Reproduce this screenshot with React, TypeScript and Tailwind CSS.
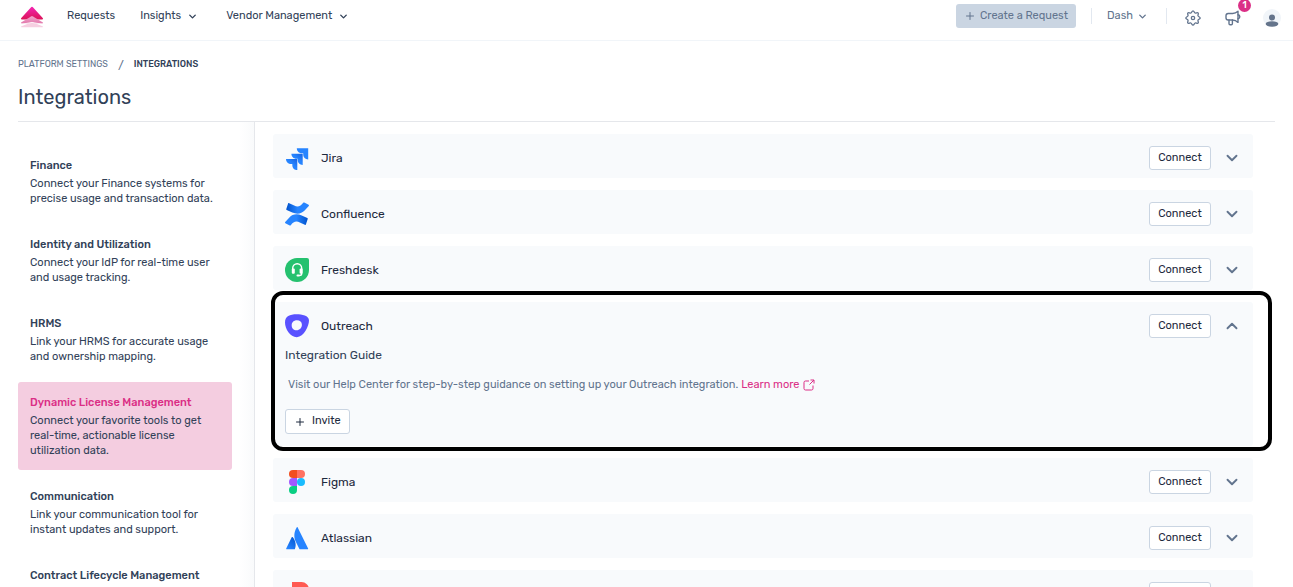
import type { ReactNode } from "react";
import clsx from "clsx";
import { ChevronDown, ChevronUp, Plus } from "lucide-react";

const categories = [
  { title: "Finance", text: "Connect your Finance systems for precise usage and transaction data." },
  { title: "Identity and Utilization", text: "Connect your IdP for real-time user and usage tracking." },
  { title: "HRMS", text: "Link your HRMS for accurate usage and ownership mapping." },
  {
    title: "Dynamic License Management",
    text: "Connect your favorite tools to get real-time, actionable license utilization data.",
    active: true,
  },
  { title: "Communication", text: "Link your communication tool for instant updates and support." },
  { title: "Contract Lifecycle Management", text: "" },
];

const BrandLogo = () => (
  <svg viewBox="0 0 24 22" className="h-[22px] w-6" aria-hidden="true">
    <defs>
      <linearGradient id="brand" x1="0" y1="0" x2="0" y2="1">
        <stop offset="0" stopColor="#f326b4" />
        <stop offset="1" stopColor="#dc1458" />
      </linearGradient>
      <linearGradient id="brandMid" x1="0" y1="0" x2="0" y2="1">
        <stop offset="0" stopColor="#f2a9cf" />
        <stop offset="1" stopColor="#e277ab" />
      </linearGradient>
    </defs>
    <path d="M1.800 13.400c-.8 0-1.100-.7-.5-1.300L11.300 1q.7-.7 1.400 0l10 11.100c.6.600.3 1.300-.5 1.300z" fill="url(#brand)" />
    <path d="M1.800 17.400c-.8 0-1-.7-.4-1.100L11 10.400q1-.6 2 0l9.600 5.900c.6.400.4 1.100-.4 1.100z" fill="url(#brandMid)" />
    <path d="M1.800 21.200c-.8 0-1-.7-.3-1l9.300-3.700q1.200-.4 2.400 0l9.300 3.700c.7.300.5 1-.3 1z" fill="#f6cfe1" />
    <path d="M1.500 18.300 12 16.400l10.500 1.900" fill="none" stroke="#fff" strokeWidth=".8" />
  </svg>
);

const GearIcon = () => (
  <svg viewBox="0 0 24 24" className="size-4" fill="none" stroke="currentColor" strokeWidth="2" strokeLinejoin="round" aria-hidden="true">
    <path d="M12 1.200c1.700 0 1.900 2.800 3.200 3.300s3.400-1.300 4.500-.2-.7 3.200-.2 4.500 3.300 1.500 3.300 3.200-2.800 1.900-3.300 3.200 1.300 3.400.2 4.500-3.200-.7-4.500-.2-1.500 3.300-3.200 3.300-1.900-2.800-3.200-3.300-3.400 1.300-4.500.2.700-3.200.2-4.500-3.300-1.500-3.300-3.200 2.800-1.900 3.300-3.200-1.300-3.400-.2-4.500 3.200.7 4.500.2 1.500-3.300 3.200-3.300z" />
    <circle cx="12" cy="12" r="2.500" />
  </svg>
);

const MegaphoneIcon = () => (
  <svg viewBox="0 0 16 16" className="size-4" fill="none" stroke="currentColor" strokeWidth="1.400" strokeLinejoin="round" strokeLinecap="round" aria-hidden="true">
    <path d="M13 1.200v11.200C11.400 10.800 9.700 10 7.600 10H3.200A2.200 2.200 0 0 1 1 7.800V5.700a2.200 2.200 0 0 1 2.200-2.200h4.400c2.100 0 3.800-.8 5.400-2.300z" />
    <path d="M13 4.800c2.400.4 2.400 3.600 0 4M4 10v3.600c0 .7.400 1.200 1.100 1.200h1.200c.7 0 1.100-.5 1.100-1.200V10" />
  </svg>
);

const JiraLogo = () => (
  <svg viewBox="0 0 24 24" className="size-6" aria-hidden="true">
    <defs>
      <linearGradient id="jira" x1="1" y1="0" x2="0.300" y2="0.800">
        <stop offset="0.150" stopColor="#1a6ae8" />
        <stop offset="0.600" stopColor="#2684ff" />
      </linearGradient>
    </defs>
    <path d="M11.800 2.300h11.400v11.200c-2.900 0-5-2.100-5-4.900V7.300h-1.400c-2.900 0-5-2.200-5-5z" fill="#2684ff" />
    <path d="M6.400 7.700h11.300V19c-2.900 0-5-2.100-5-4.900v-1.400h-1.300c-2.900 0-5-2.200-5-5z" fill="url(#jira)" />
    <path d="M1 13.100h11.300v11c-2.900 0-5-2.100-5-4.900v-1.100H6c-2.900 0-5-2.200-5-5z" fill="url(#jira)" />
  </svg>
);

const confluenceWave =
  "M4.200 1.300c-.3-.4-.9-.3-1.100.1L1.300 7c-.1.400 0 .8.400 1l5.600 2.600c4.800 2.100 9.300 1.300 12.300-2l4.200-4.700c.3-.5.200-.9-.2-1.200L19.300.500c-.4-.2-.8-.1-1.100.3-2.500 3.600-5.500 4.600-9 2.800z";

const ConfluenceLogo = () => (
  <svg viewBox="0 0 24 24" className="size-6" aria-hidden="true">
    <defs>
      <linearGradient id="confluence" x1="0" y1="0" x2="1" y2="0">
        <stop offset="0" stopColor="#0052cc" />
        <stop offset="0.500" stopColor="#2684ff" />
      </linearGradient>
    </defs>
    <path d={confluenceWave} fill="url(#confluence)" />
    <path d={confluenceWave} transform="rotate(180 12 12)" fill="url(#confluence)" />
  </svg>
);

const FreshdeskLogo = () => (
  <svg viewBox="0 0 24 24" className="size-6" aria-hidden="true">
    <path d="M12 0h10a2 2 0 0 1 2 2v10A12 12 0 1 1 12 0z" fill="#25c16f" />
    <path d="M7.700 12v-1.800a4.500 4.500 0 0 1 9 0v5.600c0 1.200-.8 1.800-2.700 1.800" fill="none" stroke="#fff" strokeWidth="1.400" />
    <rect x="6.800" y="10.600" width="3" height="5.200" rx="1" fill="#fff" />
    <rect x="14.600" y="10.600" width="3" height="5.200" rx="1" fill="#fff" />
    <rect x="11.500" y="16.600" width="3.200" height="1.800" rx=".9" fill="#fff" />
  </svg>
);

const OutreachLogo = () => (
  <svg viewBox="0 0 24 24" className="size-6" aria-hidden="true">
    <path
      fillRule="evenodd"
      d="M11.500.3c5.500 0 12.500 1.200 12.500 6.300 0 5.300-5 16.600-12.200 16.600C5.200 23.200 0 14.900 0 8.500 0 2.200 5 .3 11.500.3zM12 6.300c-3.400 0-5.300 2.200-5.300 5.100s2 4.900 4.800 4.900c3.100 0 5.400-2.500 5.400-5.500 0-2.900-2-4.500-4.900-4.500z"
      fill="#5951ff"
    />
  </svg>
);

const FigmaLogo = () => (
  <svg viewBox="0 0 24 24" className="size-6" aria-hidden="true">
    <path d="M12 0H8a4 4 0 0 0 0 8h4z" fill="#f24e1e" />
    <path d="M12 0h4a4 4 0 0 1 0 8h-4z" fill="#ff7262" />
    <path d="M12 8H8a4 4 0 0 0 0 8h4z" fill="#a259ff" />
    <circle cx="16" cy="12" r="4" fill="#1abcfe" />
    <path d="M8 16h4v4a4 4 0 1 1-4-4z" fill="#0acf83" />
  </svg>
);

const AtlassianLogo = () => (
  <svg viewBox="0 0 24 24" className="size-6" aria-hidden="true">
    <defs>
      <linearGradient id="atlassian" x1="1" y1="0" x2="0.300" y2="1">
        <stop offset="0" stopColor="#0052cc" />
        <stop offset="1" stopColor="#2684ff" />
      </linearGradient>
    </defs>
    <path d="M7.800 11.200c-.3-.4-.8-.4-1.100.1L1.200 22.500c-.2.400.1.800.5.800h7.600c.3 0 .5-.1.600-.4 1.600-3.400.7-8.600-2.100-11.700z" fill="url(#atlassian)" />
    <path d="M11.700 1.400c-3 4.900-2.900 10.300-.9 14.300l3.600 7.200c.1.300.4.400.6.400h7.600c.5 0 .7-.4.500-.8L12.700 1.400c-.2-.5-.7-.5-1 0z" fill="#2684ff" />
  </svg>
);

const RedLogo = () => (
  <svg viewBox="0 0 24 24" className="size-6" aria-hidden="true">
    <path d="M7 0h9.500a7.500 7.500 0 0 1 0 15H12v9H7z" fill="#ff5a52" />
  </svg>
);

const IntegrationCard = ({ name, logo, children }: { name?: string; logo: ReactNode; children?: ReactNode }) => {
  const Chevron = children ? ChevronUp : ChevronDown;
  return (
    <section className="relative shrink-0 rounded-[3px] bg-slate-50 px-3">
      <div className="flex h-11 items-center pt-1">
        {logo}
        <h2 className="ml-3 flex-1 text-[12px] text-slate-800">{name}</h2>
        <button className="h-6 w-[62px] rounded-[3px] border border-slate-300 bg-white text-slate-800">
          {name && "Connect"}
        </button>
        <button aria-label="Toggle details" className="ml-3 text-slate-500">
          <Chevron size={18} strokeWidth={2.5} />
        </button>
      </div>
      {children}
    </section>
  );
};

const OutreachGuide = () => (
  <div className="pb-3">
    <h3 className="text-[12px] leading-[18px]">Integration Guide</h3>
    <p className="mt-[13px] ml-[3px] flex items-center leading-4 text-slate-500">
      Visit our Help Center for step-by-step guidance on setting up your Outreach integration.
      <a href="#" className="ml-[3px] flex items-center gap-1 text-[#db2f86]">
        Learn more
        <svg viewBox="0 0 12 12" className="size-3" fill="none" stroke="currentColor" aria-hidden="true">
          <path d="M6 2H2.500A1.500 1.500 0 0 0 1 3.500v6A1.500 1.500 0 0 0 2.500 11h6A1.500 1.500 0 0 0 10 9.500V6.500M7.500 1H11v3.500M11 1 6.500 5.500" />
        </svg>
      </a>
    </p>
    <button className="mt-4 flex h-[25px] items-center gap-1.5 rounded-[3px] border border-slate-300 bg-white px-2 text-slate-800">
      <Plus size={12} />
      Invite
    </button>
    {/* Highlight frame */}
    <div className="pointer-events-none absolute -top-[11px] -right-[19px] -bottom-[5px] -left-[2px] rounded-xl border-4 border-black" />
  </div>
);

const App = () => {
  return (
    <div className="flex h-screen flex-col overflow-hidden bg-white font-['Rubik','Roboto',sans-serif] text-[11px] text-slate-700">
      {/* Top bar */}
      <header className="flex h-[41px] shrink-0 items-start justify-between border-b border-slate-100 pr-3 pl-5">
        <nav className="flex h-[33px] items-center">
          <a href="#" aria-label="Home" className="mr-[23px]">
            <BrandLogo />
          </a>
          <a href="#" className="mr-[25px]">Requests</a>
          <button className="mr-7 flex items-center gap-1.5">
            Insights <ChevronDown size={11} strokeWidth={3} />
          </button>
          <button className="flex items-center gap-1.5">
            Vendor Management <ChevronDown size={11} strokeWidth={3} />
          </button>
        </nav>
        <div className="flex h-8 items-center text-slate-500">
          <button className="flex h-6 items-center gap-1 rounded-[3px] bg-slate-300 px-2">
            <Plus size={12} />
            Create a Request
          </button>
          <span className="ml-[15px] h-4 w-px bg-slate-200" />
          <button className="ml-[15px] flex items-center gap-1">
            Dash <ChevronDown size={11} strokeWidth={3} />
          </button>
          <span className="ml-[18px] h-4 w-px bg-slate-200" />
          <button aria-label="Settings" className="mt-1 ml-[18px]">
            <GearIcon />
          </button>
          <button aria-label="Announcements" className="relative mt-1 ml-6">
            <MegaphoneIcon />
            <span className="absolute -top-[11px] -right-2.5 flex size-[13px] items-center justify-center rounded-full bg-[#db2f86] text-[9px] font-medium text-white">
              1
            </span>
          </button>
          <button aria-label="Account" className="mt-1 ml-[22px]">
            <svg viewBox="0 0 18 18" className="size-[18px]" aria-hidden="true">
              <circle cx="9" cy="9" r="9" fill="#f1f5f9" />
              <circle cx="9" cy="8.500" r="3" fill="#64748b" />
              <ellipse cx="9" cy="15" rx="6.300" ry="2.700" fill="#64748b" />
            </svg>
          </button>
        </div>
      </header>

      {/* Page heading */}
      <div className="mx-[18px] shrink-0 border-b border-gray-200">
        <nav aria-label="Breadcrumb" className="mt-[15px] flex h-[18px] items-center text-[9px]">
          <a href="#" className="text-slate-500">PLATFORM SETTINGS</a>
          <span className="mx-2.5 text-[12px] text-slate-500">/</span>
          <span className="font-medium">INTEGRATIONS</span>
        </nav>
        <h1 className="mt-2.5 mb-[11px] text-[20px] leading-[26px]">Integrations</h1>
      </div>

      {/* Content */}
      <div className="mx-[18px] flex min-h-0 flex-1">
        <aside className="flex w-[214px] shrink-0 flex-col gap-1.5 overflow-hidden pt-[23px]">
          {categories.map((item) => (
            <a key={item.title} href="#" className={clsx("shrink-0 rounded-[3px] p-3", item.active && "bg-[#f4cde0]")}>
              <h2 className={clsx("leading-[17px] font-medium", item.active && "text-[#db2f86]")}>{item.title}</h2>
              <p className="mt-0.5 leading-[15px]">{item.text}</p>
            </a>
          ))}
        </aside>
        <div className="w-[23px] shrink-0 border-r border-gray-200 bg-linear-to-r from-white from-30% to-gray-50" />
        <main className="flex min-w-0 flex-1 flex-col gap-3 overflow-hidden pt-3 pr-[22px] pl-[18px]">
          <IntegrationCard name="Jira" logo={<JiraLogo />} />
          <IntegrationCard name="Confluence" logo={<ConfluenceLogo />} />
          <IntegrationCard name="Freshdesk" logo={<FreshdeskLogo />} />
          <IntegrationCard name="Outreach" logo={<OutreachLogo />}>
            <OutreachGuide />
          </IntegrationCard>
          <IntegrationCard name="Figma" logo={<FigmaLogo />} />
          <IntegrationCard name="Atlassian" logo={<AtlassianLogo />} />
          <IntegrationCard logo={<RedLogo />} />
        </main>
      </div>
    </div>
  );
};

export default App;
